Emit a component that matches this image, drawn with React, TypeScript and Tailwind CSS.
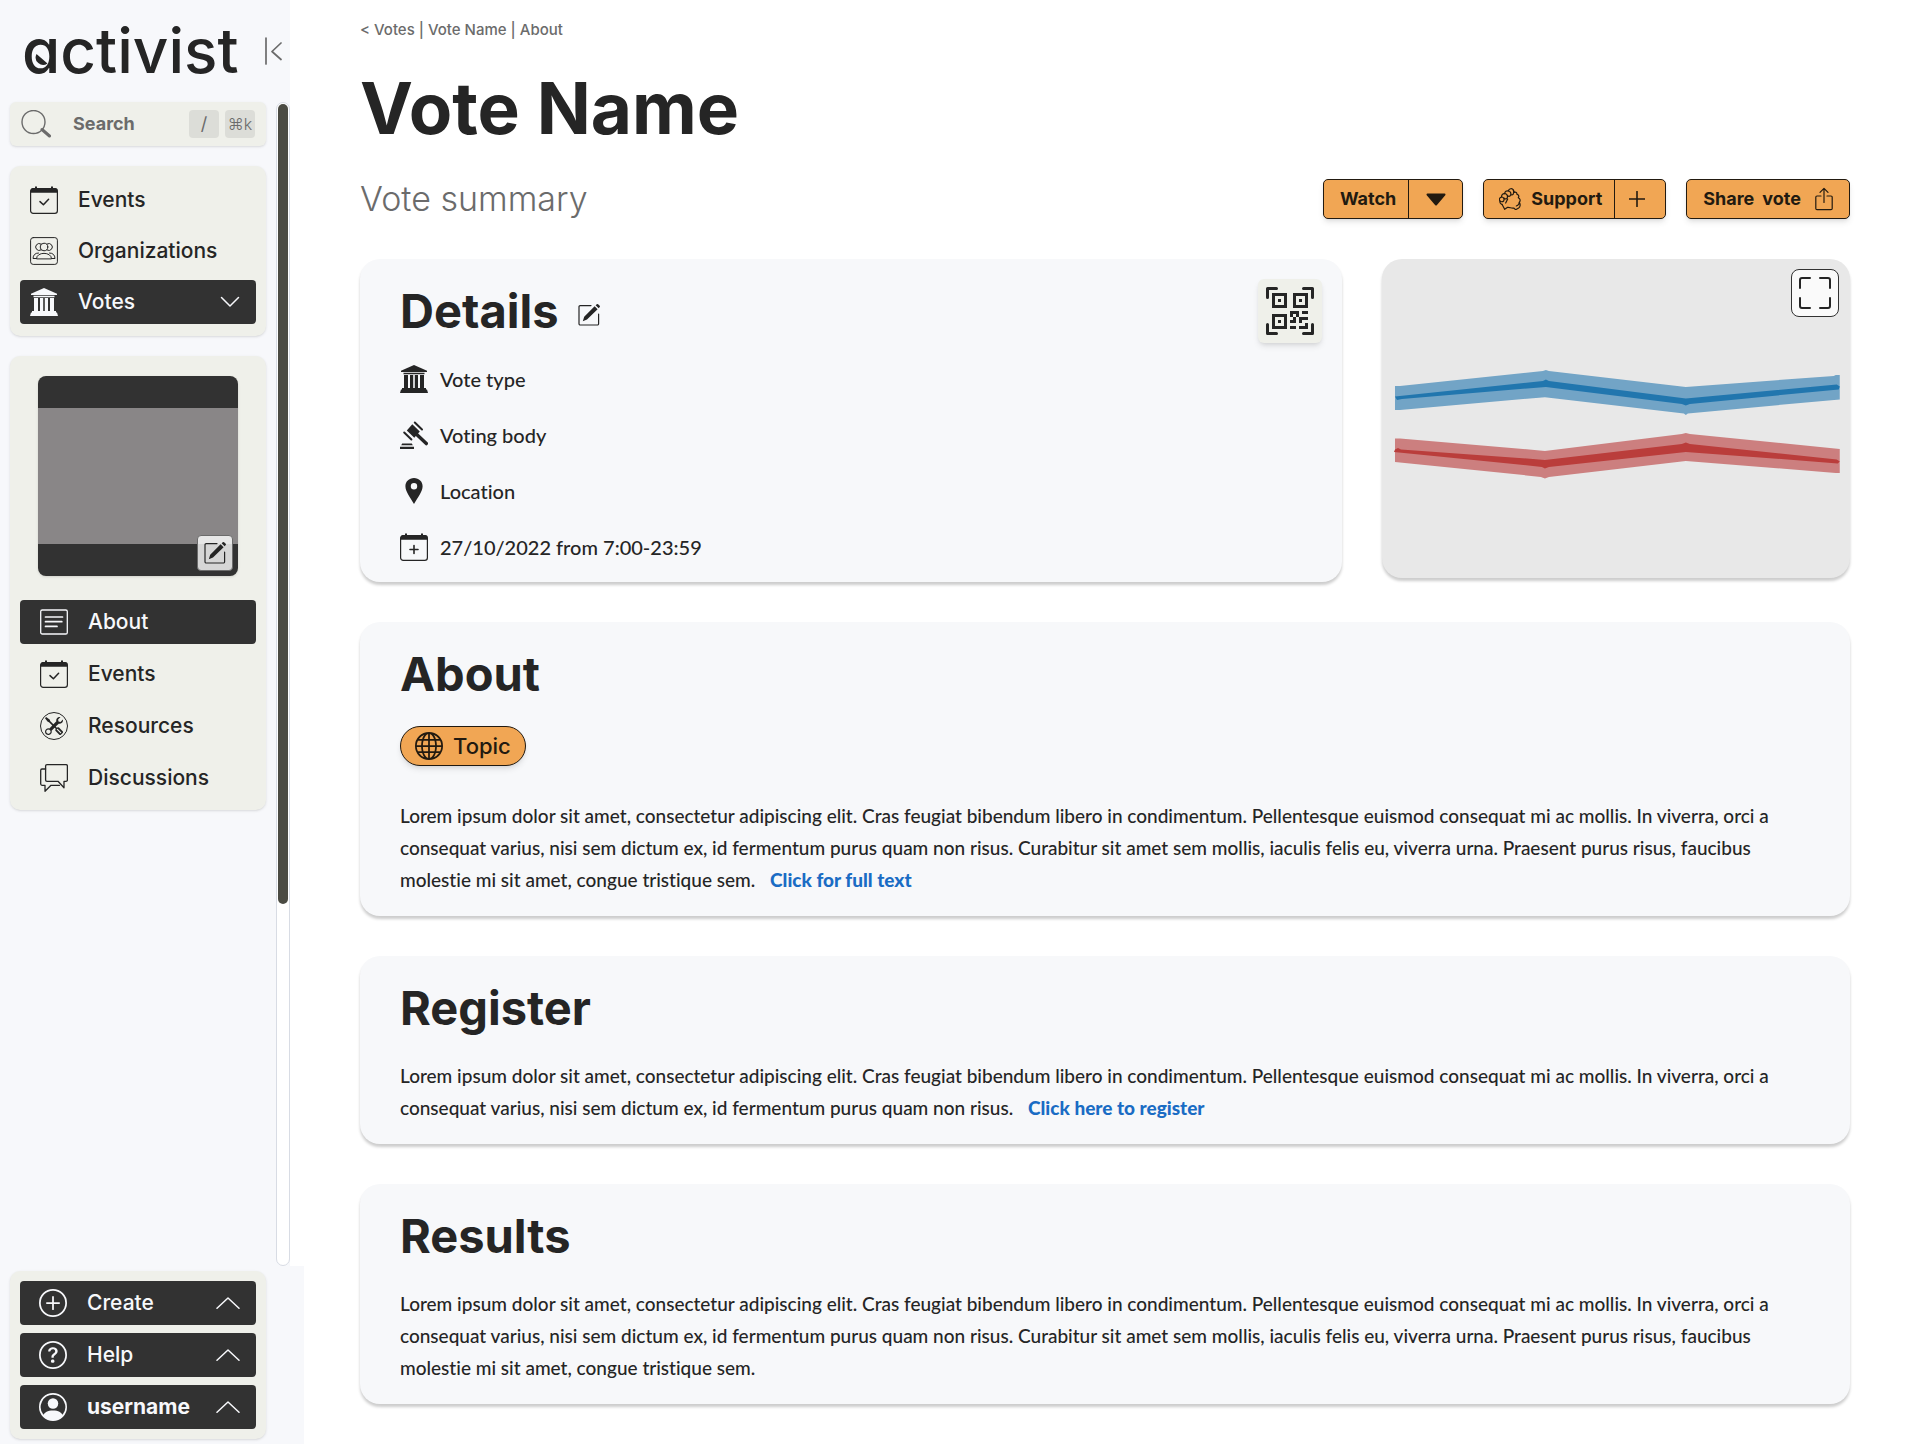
import type { ReactNode, SVGProps } from "react";
import { BsFullscreen, BsGlobe, BsPersonCircle, BsPlusCircle, BsQrCodeScan, BsQuestionCircle, BsTools } from "react-icons/bs";

type IconProps = SVGProps<SVGSVGElement>;

const LOREM_START =
  "Lorem ipsum dolor sit amet, consectetur adipiscing elit. Cras feugiat bibendum libero in condimentum. Pellentesque euismod consequat mi ac mollis. In viverra, orci a consequat varius, nisi sem dictum ex, id fermentum purus quam non risus.";
const LOREM_FULL =
  LOREM_START +
  " Curabitur sit amet sem mollis, iaculis felis eu, viverra urna. Praesent purus risus, faucibus molestie mi sit amet, congue tristique sem.";

function Svg({ children, className = "size-7", viewBox = "0 0 28 28", ...rest }: IconProps) {
  return (
    <svg
      aria-hidden="true"
      viewBox={viewBox}
      className={`shrink-0 ${className}`}
      fill="none"
      stroke="currentColor"
      strokeLinecap="round"
      strokeLinejoin="round"
      {...rest}
    >
      {children}
    </svg>
  );
}

function CalendarIcon({ mark }: { mark: "check" | "plus" }) {
  return (
    <Svg strokeWidth="1.2">
      <rect x=".6" y="2.6" width="26.8" height="24.8" rx="2.6" />
      <path d="M.6 6.4V5A3 3 0 0 1 3.600 2H5V.4h2V2h14V.4h2V2h1.400a3 3 0 0 1 3 3v1.800H.600Z" fill="currentColor" stroke="none" />
      {mark === "check" ? (
        <path d="m10 15.600 3.400 3.200 5.200-5.600" strokeWidth="1.500" />
      ) : (
        <path d="M14 12.500v8M10 16.500h8" strokeWidth="1.600" />
      )}
    </Svg>
  );
}

function OrganizationIcon() {
  return (
    <Svg strokeWidth="1">
      <rect x=".6" y=".6" width="26.800" height="26.800" rx="2.600" />
      <circle cx="14" cy="10" r="3.800" />
      <path d="M11 7a3.500 3.500 0 1 0 0 6M17 7a3.500 3.500 0 1 1 0 6" />
      <path d="M6.500 21.500c0-7 15-7 15 0ZM6.200 21.500H3c.2-3.500 2-5.500 5.500-5.500M21.800 21.500H25c-.2-3.500-2-5.500-5.500-5.500" />
    </Svg>
  );
}

function BankIcon() {
  return (
    <Svg fill="currentColor" stroke="none">
      <path d="M14 0 1 5.800v1.200h26V5.800Z" />
      <path d="M3.500 7.700h21v1.600h-21ZM4 10h4v13.500H4ZM10 10h3.200v13.500H10ZM14.800 10H18v13.500h-3.200ZM20 10h4v13.500h-4ZM2 23h24v1.700H2ZM1 24.500h26l1 3.500H0Z" />
    </Svg>
  );
}

function GavelIcon() {
  return (
    <Svg fill="currentColor" stroke="none">
      <path d="m12.300 3.300 7.500 7.200-5.500 6.300-7.500-7.200Z" />
      <path d="m14.800 1.500 7.200 7M4.200 11.500l7.200 7" stroke="currentColor" strokeWidth="2" fill="none" />
      <path d="m16.500 13.200 9.800 9.400" stroke="currentColor" strokeWidth="3.400" fill="none" />
      <path d="M2.200 22.500h9.600l1 1.700H1.200ZM0 25.700h14V28H0Z" />
    </Svg>
  );
}

function PinIcon() {
  return (
    <Svg fill="currentColor" stroke="none">
      <path fillRule="evenodd" d="M14 1c-5 0-8.600 3.600-8.600 8.300C5.400 14.500 10 20 14 27c4-7 8.600-12.500 8.600-17.700C22.600 4.600 19 1 14 1Zm0 5a3.200 3.200 0 1 1 0 6.400A3.200 3.200 0 0 1 14 6Z" />
    </Svg>
  );
}

function EditIcon() {
  return (
    <Svg viewBox="0 0 22 22" className="size-[22px]" strokeWidth="1.200">
      <path d="M13 1.600H2.200A1.200 1.200 0 0 0 1 2.800v17A1.200 1.200 0 0 0 2.200 21h17.200a1.200 1.200 0 0 0 1.200-1.200V10" />
      <path d="m16.600 2.200 3 3L9 15.400l-4.200 1.800 1.400-4.400ZM17.600 1.300l1.200-1a1 1 0 0 1 1.300 0l1.600 1.500a1 1 0 0 1 0 1.300l-1 1.200Z" fill="currentColor" stroke="none" />
    </Svg>
  );
}

function DocumentIcon() {
  return (
    <Svg strokeWidth="1.300">
      <rect x=".7" y="2" width="26.600" height="24" rx="1.600" />
      <path d="M5.500 9h17M5.500 13.700h16.300M5.500 18.400h11.500" strokeWidth="1.700" />
    </Svg>
  );
}

function ResourcesIcon() {
  return (
    <span className="flex size-7 shrink-0 items-center justify-center rounded-full border border-[#252525]">
      <BsTools className="size-[18px]" aria-hidden="true" />
    </span>
  );
}

function DiscussionIcon() {
  return (
    <Svg strokeWidth="1.300">
      <path d="M7 .7h19a1.400 1.400 0 0 1 1.400 1.400v13.800a1.400 1.400 0 0 1-1.400 1.400h-2v6.500l-6-6.500H7a1.400 1.400 0 0 1-1.400-1.400V2.100A1.400 1.400 0 0 1 7 .7Z" />
      <path d="M5.600 5H2A1.400 1.400 0 0 0 .700 6.400V20A1.400 1.400 0 0 0 2 21.300h3v6l6-6h8.500" />
    </Svg>
  );
}

function HandsIcon() {
  return (
    <Svg viewBox="0 0 66 66" className="size-[22px]" strokeWidth="3.600">
      <path d="M9 49c-5-1-7-6-6-10-4-5-1-11 5-12-1-7 4-11 9-10 0-7 6-10 11-8 2-8 12-9 15-3l3 7c5-2 8 1 8 6 5 1 7 6 4 10 6 3 7 9 3 14" />
      <path d="M8 27c6 0 9 8 6 12-3 3-9 3-11 0M17 17c6-1 10 7 8 12-2 5-8 5-10 1M28 9c6 0 9 7 7 12-2 5-8 5-10 1M35 20c6 3 12-3 8-14" />
      <path d="M61 43c4 6 3 14-2 17l-9 5-6-5c-6 2-12-3-18-2l-9 6-8-15M26 33l-6 12M61 43c0 6-3 9-9 11" />
    </Svg>
  );
}

function ShareIcon() {
  return (
    <Svg viewBox="0 0 18 24" className="h-6 w-[18px]" strokeWidth="1.200">
      <path d="M6 9H2A1.200 1.200 0 0 0 .800 10.200v11.300A1.200 1.200 0 0 0 2 22.700h14a1.200 1.200 0 0 0 1.200-1.200V10.200A1.200 1.200 0 0 0 16 9h-4M9 15.500V1.500M5 5.300l4-4 4 4" />
    </Svg>
  );
}

function Chevron({ up = false }: { up?: boolean }) {
  return (
    <Svg viewBox="0 0 24 12" className={up ? "h-3 w-6" : "h-3 w-6 rotate-180"} strokeWidth="1.500">
      {up ? <path d="M1 11.300 12 1l11 10.300" /> : <path d="M3.500 10.500 12 2l8.500 8.500" />}
    </Svg>
  );
}

function NavItem({ icon, label, active = false, inset = false, chevron = false }: { icon: ReactNode; label: string; active?: boolean; inset?: boolean; chevron?: boolean }) {
  return (
    <li>
      <a
        href="#"
        aria-current={active ? "page" : undefined}
        className={`flex h-11 items-center gap-5 rounded pr-3.5 text-[21px] font-medium ${inset ? "pl-5" : "pl-2.5"} ${active ? "bg-[#323232] text-[#f7f8fb]" : "text-[#252525]"}`}
      >
        {icon}
        <span className="flex-1">{label}</span>
        {chevron && <Chevron />}
      </a>
    </li>
  );
}

function MenuButton({ icon, label, bold = false }: { icon: ReactNode; label: string; bold?: boolean }) {
  return (
    <button type="button" className={`flex h-11 items-center gap-5 rounded bg-[#323232] pr-4 pl-[19px] text-left text-[21px] text-[#f7f8fb] ${bold ? "font-bold" : "font-medium"}`}>
      {icon}
      <span className="flex-1">{label}</span>
      <Chevron up />
    </button>
  );
}

function Sidebar() {
  return (
    <aside className="flex w-[290px] shrink-0 flex-col bg-[#f7f8fb]">
      <header className="flex h-[102px] items-center justify-between pr-2 pl-[22px]">
        <a href="#" className="relative text-[62px] leading-[62px] font-medium text-[#252525] [font-feature-settings:'cv11']">
          activist
          <svg aria-hidden="true" viewBox="0 0 14 14" className="absolute bottom-[15px] left-[13px] size-3.5">
            <path d="M1.500 1 12.500 10.500A7.500 7.500 0 0 1 1.500 1Z" fill="#252525" />
          </svg>
        </a>
        <button type="button" aria-label="Collapse sidebar" className="text-[#6b6b6b]">
          <Svg viewBox="0 0 17 28" className="h-7 w-[17px]" strokeWidth="1.700">
            <path d="M1 1v26M16 6l-9 8.500 9 8" />
          </Svg>
        </button>
      </header>

      <div className="flex flex-1">
        <div className="flex min-w-0 flex-1 flex-col gap-5 px-2.5">
          <label className="flex h-11 items-center rounded-md bg-[#eff0ea] pr-[11px] pl-2.5 text-[#6b6b6b] shadow-sm">
            <Svg viewBox="0 0 32 28" className="h-7 w-8" strokeWidth="1.400">
              <circle cx="13.500" cy="12" r="11.500" />
              <path d="m22 19.500 7.500 6.500" strokeWidth="3" />
            </Svg>
            <input type="search" placeholder="Search" aria-label="Search" className="ml-[21px] w-full min-w-0 flex-1 bg-transparent text-lg font-bold outline-none placeholder:text-[#6b6b6b]" />
            <kbd className="mr-1.5 flex h-7 w-[30px] shrink-0 items-center justify-center rounded bg-[#dcddd8] font-[Inter] text-lg">/</kbd>
            <kbd className="flex h-7 w-[30px] shrink-0 items-center justify-center rounded bg-[#dcddd8] font-[Inter] text-base font-light">⌘k</kbd>
          </label>

          <nav aria-label="Main" className="rounded-[10px] bg-[#eff0ea] px-2.5 py-3 shadow-sm">
            <ul className="flex flex-col gap-[7px]">
              <NavItem icon={<CalendarIcon mark="check" />} label="Events" />
              <NavItem icon={<OrganizationIcon />} label="Organizations" />
              <NavItem icon={<BankIcon />} label="Votes" active chevron />
            </ul>
          </nav>

          <section className="flex flex-col gap-6 rounded-[10px] bg-[#eff0ea] px-2.5 pt-5 pb-2.5 shadow-sm">
            <div className="relative mx-auto flex size-[200px] items-center overflow-hidden rounded-lg bg-[#323232] shadow">
              <div className="h-[136px] w-full bg-[#898687]" />
              <button type="button" aria-label="Edit image" className="absolute right-[5px] bottom-[5px] flex size-9 items-center justify-center rounded border border-[#6b6b6b] bg-white/80 text-[#252525]">
                <EditIcon />
              </button>
            </div>
            <nav aria-label="Vote">
              <ul className="flex flex-col gap-2">
                <NavItem inset active icon={<DocumentIcon />} label="About" />
                <NavItem inset icon={<CalendarIcon mark="check" />} label="Events" />
                <NavItem inset icon={<ResourcesIcon />} label="Resources" />
                <NavItem inset icon={<DiscussionIcon />} label="Discussions" />
              </ul>
            </nav>
          </section>
        </div>

        <div className="w-3.5 shrink-0 rounded-full border border-[#d8dce4] bg-white p-px">
          <div className="h-[69%] rounded-full bg-[#4b4b43]" />
        </div>
      </div>

      <footer className="-mr-3.5 bg-[#f7f8fb] py-[5px] pr-[38px] pl-2.5">
        <div className="flex flex-col gap-2 rounded-[10px] bg-[#eff0ea] p-2.5 shadow-sm">
          <MenuButton icon={<BsPlusCircle className="size-7 shrink-0" />} label="Create" />
          <MenuButton icon={<BsQuestionCircle className="size-7 shrink-0" />} label="Help" />
          <MenuButton bold icon={<BsPersonCircle className="size-7 shrink-0" />} label="username" />
        </div>
      </footer>
    </aside>
  );
}

const actionClass = "flex h-10 items-stretch rounded-[5px] border border-[#221a10] bg-[#f1a654] text-lg font-bold text-[#221a10] shadow-md";

function Actions() {
  return (
    <div className="flex gap-5">
      <div className={actionClass}>
        <button type="button" className="pr-3 pl-4">Watch</button>
        <button type="button" aria-label="Watch options" className="flex w-[54px] items-center justify-center border-l border-[#221a10]">
          <Svg viewBox="0 0 20 13" className="h-[13px] w-5" fill="currentColor" strokeWidth="2">
            <path d="M1.500 1.500h17L10 11.500Z" />
          </Svg>
        </button>
      </div>
      <div className={actionClass}>
        <button type="button" className="flex items-center gap-2.5 pr-3 pl-[15px]">
          <HandsIcon />
          Support
        </button>
        <button type="button" aria-label="Add support" className="flex w-[51px] items-center justify-center border-l border-[#221a10] pr-1.5">
          <Svg viewBox="0 0 16 16" className="size-4" strokeWidth="1.600">
            <path d="M8 .5v15M.5 8h15" />
          </Svg>
        </button>
      </div>
      <button type="button" className={`${actionClass} gap-3.5 px-4`}>
        <span className="flex items-center gap-2 self-center">
          <span>Share</span>
          <span>vote</span>
        </span>
        <span className="self-center"><ShareIcon /></span>
      </button>
    </div>
  );
}

function DetailRow({ icon, children }: { icon: ReactNode; children: ReactNode }) {
  return (
    <li className="flex h-7 items-center gap-3">
      {icon}
      {children}
    </li>
  );
}

function SupportChart() {
  return (
    <svg role="img" aria-label="Votes over time" viewBox="0 0 468 319" className="h-auto w-full">
      <path d="M13 127h5l143-15 3-1 3 1 137 16 148-11 2-1h4v24.500l-152 14-2 1.500-2-1.500-139-16.300L18 151h-5Z" fill="#72a4c6" />
      <path d="M13 137.500 161 122l3-1.500 3 1.500 137 17.500 151-14 3 2-1 3-149 14.500-4 1.500-4-1.500-136-17L20 140l-5 1Z" fill="#2176ae" />
      <path d="M13 179.500h5L163 192l137-17 4-1 4 1 150 15v24h-4L304 202l-137 16-4 1.500-4-1.500L13 203Z" fill="#cc7f7f" />
      <path d="m13 190.500 3-1.500 3 1.500L163 201l137-16 4-1.500 4 1.500 147 15.500 3 2-2 2-152-11.500-137 15-4 1.500-3-1.500-148-15Z" fill="#ba3d3b" />
    </svg>
  );
}

const cardClass = "rounded-[20px] bg-[#f7f8fa] shadow-[0_3px_3px_rgba(0,0,0,0.2)]";
const headingClass = "text-[47px] leading-[48px] font-bold";
const textClass = "font-[Lato] text-[19px] leading-8 font-medium";
const linkClass = "ml-2.5 font-black text-[#1a6cc4]";

export default function App() {
  return (
    <div className="flex min-h-screen bg-white font-[Inter,sans-serif] text-[#252525] [font-variant-ligatures:no-common-ligatures]">
      <Sidebar />
      <main className="flex min-w-0 flex-1 flex-col px-[70px] pt-5 pb-10">
        <nav aria-label="Breadcrumb" className="flex gap-1 text-[15px] leading-5 font-medium text-[#6b6b6b]">
          <a href="#">&lt; Votes</a>
          <span>|</span>
          <a href="#">Vote Name</a>
          <span>|</span>
          <a href="#">About</a>
        </nav>
        <h1 className="mt-8 text-[71px] leading-[72px] font-bold">Vote Name</h1>
        <div className="mt-[35px] flex items-center justify-between">
          <p className="text-[34px] leading-10 font-light text-[#6b6b6b]">Vote summary</p>
          <Actions />
        </div>

        <div className="mt-10 grid grid-cols-[21fr_10fr] items-start gap-10">
          <section className={`${cardClass} relative px-10 pt-7 pb-[21px]`}>
            <div className="flex items-center gap-5">
              <h2 className={headingClass}>Details</h2>
              <button type="button" aria-label="Edit details" className="mt-2"><EditIcon /></button>
            </div>
            <button type="button" aria-label="Show QR code" className="absolute top-5 right-5 rounded-md bg-[#eff0ea] p-2 shadow-md">
              <BsQrCodeScan className="size-12" />
            </button>
            <ul className="mt-[30px] flex flex-col gap-7 font-[Lato] text-xl font-medium">
              <DetailRow icon={<BankIcon />}>Vote type</DetailRow>
              <DetailRow icon={<GavelIcon />}>Voting body</DetailRow>
              <DetailRow icon={<PinIcon />}>Location</DetailRow>
              <DetailRow icon={<CalendarIcon mark="plus" />}>27/10/2022 from 7:00-23:59</DetailRow>
            </ul>
          </section>
          <section className="relative flex rounded-[20px] bg-[#e8e8e8] shadow-[0_3px_3px_rgba(0,0,0,0.2)]">
            <SupportChart />
            <button type="button" aria-label="Expand chart" className="absolute top-2.5 right-[11px] flex size-12 items-center justify-center rounded-lg border border-[#323232] bg-[#fafafa]">
              <BsFullscreen className="size-8" />
            </button>
          </section>
        </div>

        <section className={`${cardClass} mt-10 px-10 pt-7 pb-5`}>
          <h2 className={headingClass}>About</h2>
          <button type="button" className="mt-7 flex h-10 items-center gap-2.5 rounded-full border border-[#221a10] bg-[#f1a654] px-3.5 text-[22px] font-medium text-[#221a10] shadow-md">
            <BsGlobe className="size-7" />
            Topic
          </button>
          <p className={`${textClass} mt-[34px]`}>
            {LOREM_FULL} <a href="#" className={linkClass}>Click for full text</a>
          </p>
        </section>

        <section className={`${cardClass} mt-10 px-10 pt-7 pb-5`}>
          <h2 className={headingClass}>Register</h2>
          <p className={`${textClass} mt-7`}>
            {LOREM_START} <a href="#" className={linkClass}>Click here to register</a>
          </p>
        </section>

        <section className={`${cardClass} mt-10 px-10 pt-7 pb-5`}>
          <h2 className={headingClass}>Results</h2>
          <p className={`${textClass} mt-7`}>{LOREM_FULL}</p>
        </section>
      </main>
    </div>
  );
}
